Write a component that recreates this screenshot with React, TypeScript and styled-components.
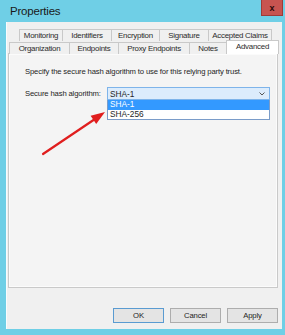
import React from "react";
import styled, { createGlobalStyle } from "styled-components";

const colors = {
    frame: "#6fcfe6",
    body: "#f0f0f0",
    panel: "#f4f4f4",
    line: "#c9c9c9",
    text: "#1e1e1e",
    select: "#3399ff",
};

const GlobalStyle = createGlobalStyle`
    html, body {
        margin: 0;
        padding: 0;
        background: ${colors.frame};
    }
    body {
        font-family: "Liberation Sans", Arial, sans-serif;
        color: ${colors.text};
    }
`;

const Window = styled.div`
    position: relative;
    width: 285px;
    height: 335px;
    background: ${colors.frame};
    display: flex;
    flex-direction: column;
    overflow: hidden;
`;

const TitleBar = styled.div`
    height: 22px;
    display: flex;
    align-items: flex-start;
    justify-content: space-between;
    padding-left: 10px;
`;

const Title = styled.div`
    font-size: 11.5px;
    line-height: 22px;
    letter-spacing: -0.2px;
    color: #1a1a1a;
`;

const CloseButton = styled.div`
    width: 22px;
    height: 16px;
    margin-right: 2px;
    background: #c75450;
    border: 1px solid #9e3b38;
    border-top: none;
    box-sizing: border-box;
    display: flex;
    align-items: center;
    justify-content: center;
    font-size: 9px;
    font-weight: 700;
    color: #2a0a0a;
`;

const Body = styled.div`
    flex: 1;
    margin: 0 3px 6px 6px;
    background: ${colors.body};
    border-left: 1px solid #f8fdff;
    display: flex;
    flex-direction: column;
    padding: 6px 4px 6px 1px;
`;

const TabRow = styled.div<{ $inset: number }>`
    display: flex;
    height: 13px;
    padding-left: ${({ $inset }) => $inset}px;
    align-items: flex-end;
`;

const Tab = styled.div<{ $width: number; $active?: boolean }>`
    width: ${({ $width }) => $width}px;
    height: ${({ $active }) => ($active ? 14 : 12)}px;
    box-sizing: border-box;
    border: 1px solid ${colors.line};
    border-bottom: none;
    margin-right: -1px;
    background: ${({ $active }) => ($active ? "#ffffff" : "#f0f0f0")};
    font-size: 7.9px;
    line-height: 11px;
    letter-spacing: -0.25px;
    text-align: center;
    color: #2b2b2b;
    position: relative;
    z-index: ${({ $active }) => ($active ? 1 : 0)};
`;

const Panel = styled.div`
    height: 235px;
    box-sizing: border-box;
    border: 1px solid ${colors.line};
    background: ${colors.panel};
    box-shadow: inset 0 0 0 1px #fbfbfb;
    padding: 13px 0 0 16px;
    margin-top: -1px;
`;

const Hint = styled.div`
    font-size: 7.7px;
    letter-spacing: -0.15px;
    line-height: 10px;
`;

const FieldRow = styled.div`
    display: flex;
    align-items: center;
    margin-top: 10px;
`;

const Label = styled.div`
    width: 82px;
    font-size: 7.7px;
    letter-spacing: -0.15px;
`;

const ComboWrap = styled.div`
    position: relative;
    width: 163px;
`;

const Combo = styled.div`
    height: 13px;
    box-sizing: border-box;
    border: 1px solid #7eb4ea;
    background: #dcecfc;
    display: flex;
    align-items: center;
    justify-content: space-between;
    padding: 0 4px 0 2px;
    font-size: 8.3px;
`;

const Chevron = styled.svg`
    width: 6px;
    height: 4px;
`;

const DropList = styled.div`
    position: absolute;
    top: 13px;
    left: 0;
    right: 0;
    border: 1px solid #7a9cc9;
    border-top: none;
    background: #ffffff;
`;

const Option = styled.div<{ $selected?: boolean }>`
    height: 9.5px;
    line-height: 9.5px;
    padding-left: 2px;
    font-size: 8.3px;
    background: ${({ $selected }) => ($selected ? colors.select : "#ffffff")};
    color: ${({ $selected }) => ($selected ? "#ffffff" : colors.text)};
`;

const ButtonRow = styled.div`
    display: flex;
    justify-content: flex-end;
    gap: 6px;
    margin-top: 20px;
`;

const Button = styled.div<{ $default?: boolean }>`
    width: 51px;
    height: 15px;
    box-sizing: border-box;
    border: 1px solid ${({ $default }) => ($default ? "#5a9bd1" : "#adadad")};
    background: #e4e4e4;
    font-size: 7.7px;
    letter-spacing: -0.15px;
    line-height: 13px;
    text-align: center;
`;

const Arrow = styled.svg`
    position: absolute;
    left: 0;
    top: 0;
    pointer-events: none;
`;

const backTabs = [
    { label: "Monitoring", width: 44 },
    { label: "Identifiers", width: 50 },
    { label: "Encryption", width: 49 },
    { label: "Signature", width: 50 },
    { label: "Accepted Claims", width: 64 },
];

const frontTabs = [
    { label: "Organization", width: 61 },
    { label: "Endpoints", width: 50 },
    { label: "Proxy Endpoints", width: 72 },
    { label: "Notes", width: 38 },
    { label: "Advanced", width: 53, active: true },
];

const App = () => {
    return (
        <>
            <GlobalStyle />
            <Window>
                <TitleBar>
                    <Title>Properties</Title>
                    <CloseButton>x</CloseButton>
                </TitleBar>
                <Body>
                    <TabRow $inset={11}>
                        {backTabs.map((tab) => (
                            <Tab key={tab.label} $width={tab.width}>
                                {tab.label}
                            </Tab>
                        ))}
                    </TabRow>
                    <TabRow $inset={1}>
                        {frontTabs.map((tab) => (
                            <Tab
                                key={tab.label}
                                $width={tab.width}
                                $active={tab.active}
                            >
                                {tab.label}
                            </Tab>
                        ))}
                    </TabRow>
                    <Panel>
                        <Hint>
                            Specify the secure hash algorithm to use for this
                            relying party trust.
                        </Hint>
                        <FieldRow>
                            <Label>Secure hash algorithm:</Label>
                            <ComboWrap>
                                <Combo>
                                    <span>SHA-1</span>
                                    <Chevron viewBox="0 0 6 4">
                                        <path
                                            d="M0.5 0.5 L3 3 L5.5 0.5"
                                            fill="none"
                                            stroke="#555"
                                            strokeWidth="1"
                                        />
                                    </Chevron>
                                </Combo>
                                <DropList>
                                    <Option $selected>SHA-1</Option>
                                    <Option>SHA-256</Option>
                                </DropList>
                            </ComboWrap>
                        </FieldRow>
                    </Panel>
                    <ButtonRow>
                        <Button $default>OK</Button>
                        <Button>Cancel</Button>
                        <Button>Apply</Button>
                    </ButtonRow>
                </Body>
                <Arrow width="285" height="335" viewBox="0 0 285 335">
                    <line
                        x1="43"
                        y1="154"
                        x2="95"
                        y2="119"
                        stroke="#e01e1e"
                        strokeWidth="2.2"
                        strokeLinecap="round"
                    />
                    <polygon
                        points="105,112 90.6,115.8 96.2,124"
                        fill="#e01e1e"
                    />
                </Arrow>
            </Window>
        </>
    );
};

export default App;
